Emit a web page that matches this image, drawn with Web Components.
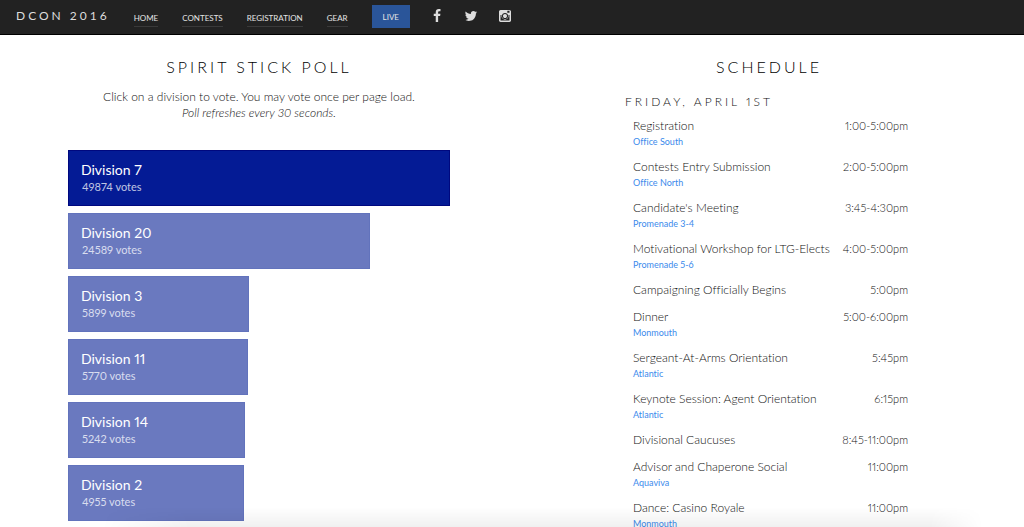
<!DOCTYPE html>
<html lang="en">
<head>
<meta charset="utf-8">
<meta name="viewport" content="width=device-width, initial-scale=1">
<title>DCON 2016</title>
<style>
  body { margin: 0; background: #fff; color: #111; font-family: Lato, "Open Sans", sans-serif; font-weight: 300;
    font-variant-ligatures: none; font-variant-numeric: proportional-nums; }
</style>
</head>
<body>
<dcon-app>
  <dcon-header slot="header">
    <span slot="brand">DCON 2016</span>
    <nav-link href="#home">HOME</nav-link>
    <nav-link href="#contests">CONTESTS</nav-link>
    <nav-link href="#registration">REGISTRATION</nav-link>
    <nav-link href="#gear">GEAR</nav-link>
    <nav-link href="#live" active>LIVE</nav-link>
    <social-link slot="social" name="facebook"></social-link>
    <social-link slot="social" name="twitter"></social-link>
    <social-link slot="social" name="instagram"></social-link>
  </dcon-header>
  <spirit-poll>
    <span slot="title">SPIRIT STICK POLL</span>
    <span slot="intro">Click on a division to vote. You may vote once per page load.</span>
    <em slot="note">Poll refreshes every 30 seconds.</em>
    <poll-bar share="100" leading>Division 7<span slot="votes">49874 votes</span></poll-bar>
    <poll-bar share="79">Division 20<span slot="votes">24589 votes</span></poll-bar>
    <poll-bar share="47.5">Division 3<span slot="votes">5899 votes</span></poll-bar>
    <poll-bar share="47.2">Division 11<span slot="votes">5770 votes</span></poll-bar>
    <poll-bar share="46.3">Division 14<span slot="votes">5242 votes</span></poll-bar>
    <poll-bar share="46">Division 2<span slot="votes">4955 votes</span></poll-bar>
  </spirit-poll>
  <event-schedule>
    <span slot="title">SCHEDULE</span>
    <span slot="day">FRIDAY, APRIL 1ST</span>
  </event-schedule>
</dcon-app>

<script>
const define = (name, html, setup) => {
  const template = document.createElement('template');
  template.innerHTML = html;
  customElements.define(name, class extends HTMLElement {
    constructor() {
      super();
      this.attachShadow({ mode: 'open' }).append(template.content.cloneNode(true));
    }
    connectedCallback() { if (setup) setup(this, this.shadowRoot); }
  });
};

define('dcon-app', `
  <style>
    :host { display: flex; flex-direction: column; height: 100vh; overflow: hidden; position: relative; }
    main { flex: 1; min-height: 0; overflow: hidden; display: grid; grid-template-columns: minmax(0, 1fr) minmax(0, 1fr); align-items: start; }
    .fade { position: absolute; left: 10%; right: 4%; bottom: 0; height: 20px; pointer-events: none;
      background: linear-gradient(to bottom, rgba(0,0,0,0), rgba(0,0,0,.06));
      -webkit-mask-image: linear-gradient(to right, transparent, #000 10%, #000 94%, transparent);
      mask-image: linear-gradient(to right, transparent, #000 10%, #000 94%, transparent); }
  </style>
  <slot name="header"></slot>
  <main><slot></slot></main>
  <div class="fade"></div>
`);

define('dcon-header', `
  <style>
    :host { display: block; background: #222; border-bottom: 1px solid #000; color: #ddd; font-weight: 400; font-variant-numeric: normal; }
    header { display: flex; align-items: center; height: 34px; padding-left: 16px; }
    .brand { font-size: 12px; line-height: 16px; letter-spacing: 3px; margin-right: 24px; padding-bottom: 2px; white-space: nowrap; }
    nav { display: flex; align-items: center; gap: 24px; }
    .social { display: flex; gap: 20px; margin-left: 20px; padding-bottom: 2px; }
  </style>
  <header>
    <div class="brand"><slot name="brand"></slot></div>
    <nav><slot></slot></nav>
    <div class="social"><slot name="social"></slot></div>
  </header>
`);

define('nav-link', `
  <style>
    :host { display: block; }
    a { display: block; color: #e4e4e4; text-decoration: none; font-size: 8px; line-height: 16px; padding-top: 2px;
      border-bottom: 1px solid #3a3a3a; white-space: nowrap; }
    :host([active]) a { background: #2a5599; border: 0; padding: 4px 11px 3px; margin-bottom: 2px; }
  </style>
  <a><slot></slot></a>
`, (el, root) => { root.querySelector('a').href = el.getAttribute('href'); });

const ICONS = {
  facebook: 'M1343 12v264h-157q-86 0-116 36t-30 108v189h293l-39 296h-254v759H734V905H479V609h255V391q0-186 104-288.500T1115 0q147 0 228 12z',
  twitter: 'M1684 408q-67 98-162 167 1 14 1 42 0 130-38 259.500T1369.500 1125 1185 1335.500t-258 146-323 54.500q-271 0-496-145 35 4 78 4 225 0 401-138-105-2-188-64.500T285 1033q33 5 61 5 43 0 85-11-112-23-185.500-111.500T172 710v-4q68 38 146 41-66-44-105-115t-39-154q0-88 44-163 121 149 294.500 238.500T884 653q-8-38-8-74 0-134 94.500-228.500T1199 256q140 0 236 102 109-21 205-78-37 115-142 178 93-10 186-50z',
  instagram: 'M1152 896q0-106-75-181t-181-75-181 75-75 181 75 181 181 75 181-75 75-181zm138 0q0 164-115 279t-279 115-279-115-115-279 115-279 279-115 279 115 115 279zm128-680h-172q-22 0-38 16t-16 38v164q0 22 16 38t38 16h172q22 0 38-16t16-38V270q0-22-16-38t-38-16zM1472 1416V776h-139q20 65 20 133 0 189-134 322t-323 133-323-133-134-322q0-68 20-133H320v640q0 27 18.500 45.500T384 1480h1024q27 0 45.500-18.500T1472 1416zM1664 328v1136q0 82-59 141t-141 59H328q-82 0-141-59t-59-141V328q0-82 59-141t141-59h1136q82 0 141 59t59 141z'
};
define('social-link', `
  <style>
    :host { display: block; }
    a { display: block; color: #ddd; }
    svg { display: block; width: 14px; height: 14px; fill: currentColor; fill-rule: evenodd; }
  </style>
  <a><svg viewBox="0 0 1792 1792" aria-hidden="true"><path/></svg></a>
`, (el, root) => {
  const name = el.getAttribute('name');
  const a = root.querySelector('a');
  a.href = '#' + name;
  a.setAttribute('aria-label', name);
  root.querySelector('path').setAttribute('d', ICONS[name]);
});

define('spirit-poll', `
  <style>
    :host { display: block; padding: 23px 62px 0 68px; }
    h2 { margin: 0; font-weight: 300; font-size: 16px; line-height: 18px; letter-spacing: 3px; text-align: center; color: #000; }
    p { margin: 13px 0 29px; font-size: 12px; line-height: 16px; text-align: center; }
    ::slotted([slot="intro"]) { display: block; }
    .bars { display: grid; gap: 7px; }
  </style>
  <h2><slot name="title"></slot></h2>
  <p><slot name="intro"></slot><slot name="note"></slot></p>
  <div class="bars"><slot></slot></div>
`);

define('poll-bar', `
  <style>
    :host { display: block; }
    button { display: block; box-sizing: border-box; height: 56px; margin: 0; padding: 0 12px; border: 1px solid #6273bc;
      background: #6a79bf; color: #fff; font: inherit; font-weight: 400; font-size: 14px; line-height: 18px; text-align: left; cursor: pointer; }
    :host([leading]) button { background: #041b95; border-color: #00087f; }
    .votes { display: block; padding-left: 1px; font-size: 11px; line-height: 16px; color: rgba(255,255,255,.75); }
  </style>
  <button type="button"><slot></slot><span class="votes"><slot name="votes"></slot></span></button>
`, (el, root) => { root.querySelector('button').style.width = el.getAttribute('share') + '%'; });

const EVENTS = [
  ['Registration', '1:00-5:00pm', 'Office South'],
  ['Contests Entry Submission', '2:00-5:00pm', 'Office North'],
  ["Candidate's Meeting", '3:45-4:30pm', 'Promenade 3-4'],
  ['Motivational Workshop for LTG-Elects', '4:00-5:00pm', 'Promenade 5-6'],
  ['Campaigning Officially Begins', '5:00pm'],
  ['Dinner', '5:00-6:00pm', 'Monmouth'],
  ['Sergeant-At-Arms Orientation', '5:45pm', 'Atlantic'],
  ['Keynote Session: Agent Orientation', '6:15pm', 'Atlantic'],
  ['Divisional Caucuses', '8:45-11:00pm'],
  ['Advisor and Chaperone Social', '11:00pm', 'Aquaviva'],
  ['Dance: Casino Royale', '11:00pm', 'Monmouth']
];
define('event-schedule', `
  <style>
    :host { display: block; padding: 23px 111px 0 113px; }
    h2 { margin: 0; font-weight: 300; font-size: 16px; line-height: 18px; letter-spacing: 3px; text-align: center; color: #000; }
    h3 { margin: 18px 0 6px; font-weight: 300; font-size: 12px; line-height: 16px; letter-spacing: 3px; }
    table { width: 100%; border-collapse: collapse; font-size: 12px; line-height: 19px; }
    td { padding: 0 0 8px 8px; vertical-align: top; text-align: left; white-space: nowrap; }
    td + td { padding: 0 5px 8px 0; text-align: right; font-size: 11px; }
    a { display: block; font-weight: 400; font-size: 9px; line-height: 14px; color: #3b8aec; text-decoration: none; }
  </style>
  <h2><slot name="title"></slot></h2>
  <h3><slot name="day"></slot></h3>
  <table><tbody></tbody></table>
`, (el, root) => {
  const body = root.querySelector('tbody');
  for (const [name, time, place] of EVENTS) {
    const row = body.insertRow();
    row.insertCell().textContent = name;
    row.insertCell().textContent = time;
    if (place) {
      const link = document.createElement('a');
      link.href = '#' + place.toLowerCase().replace(/ /g, '-');
      link.textContent = place;
      row.cells[0].append(link);
    }
  }
});
</script>
</body>
</html>
